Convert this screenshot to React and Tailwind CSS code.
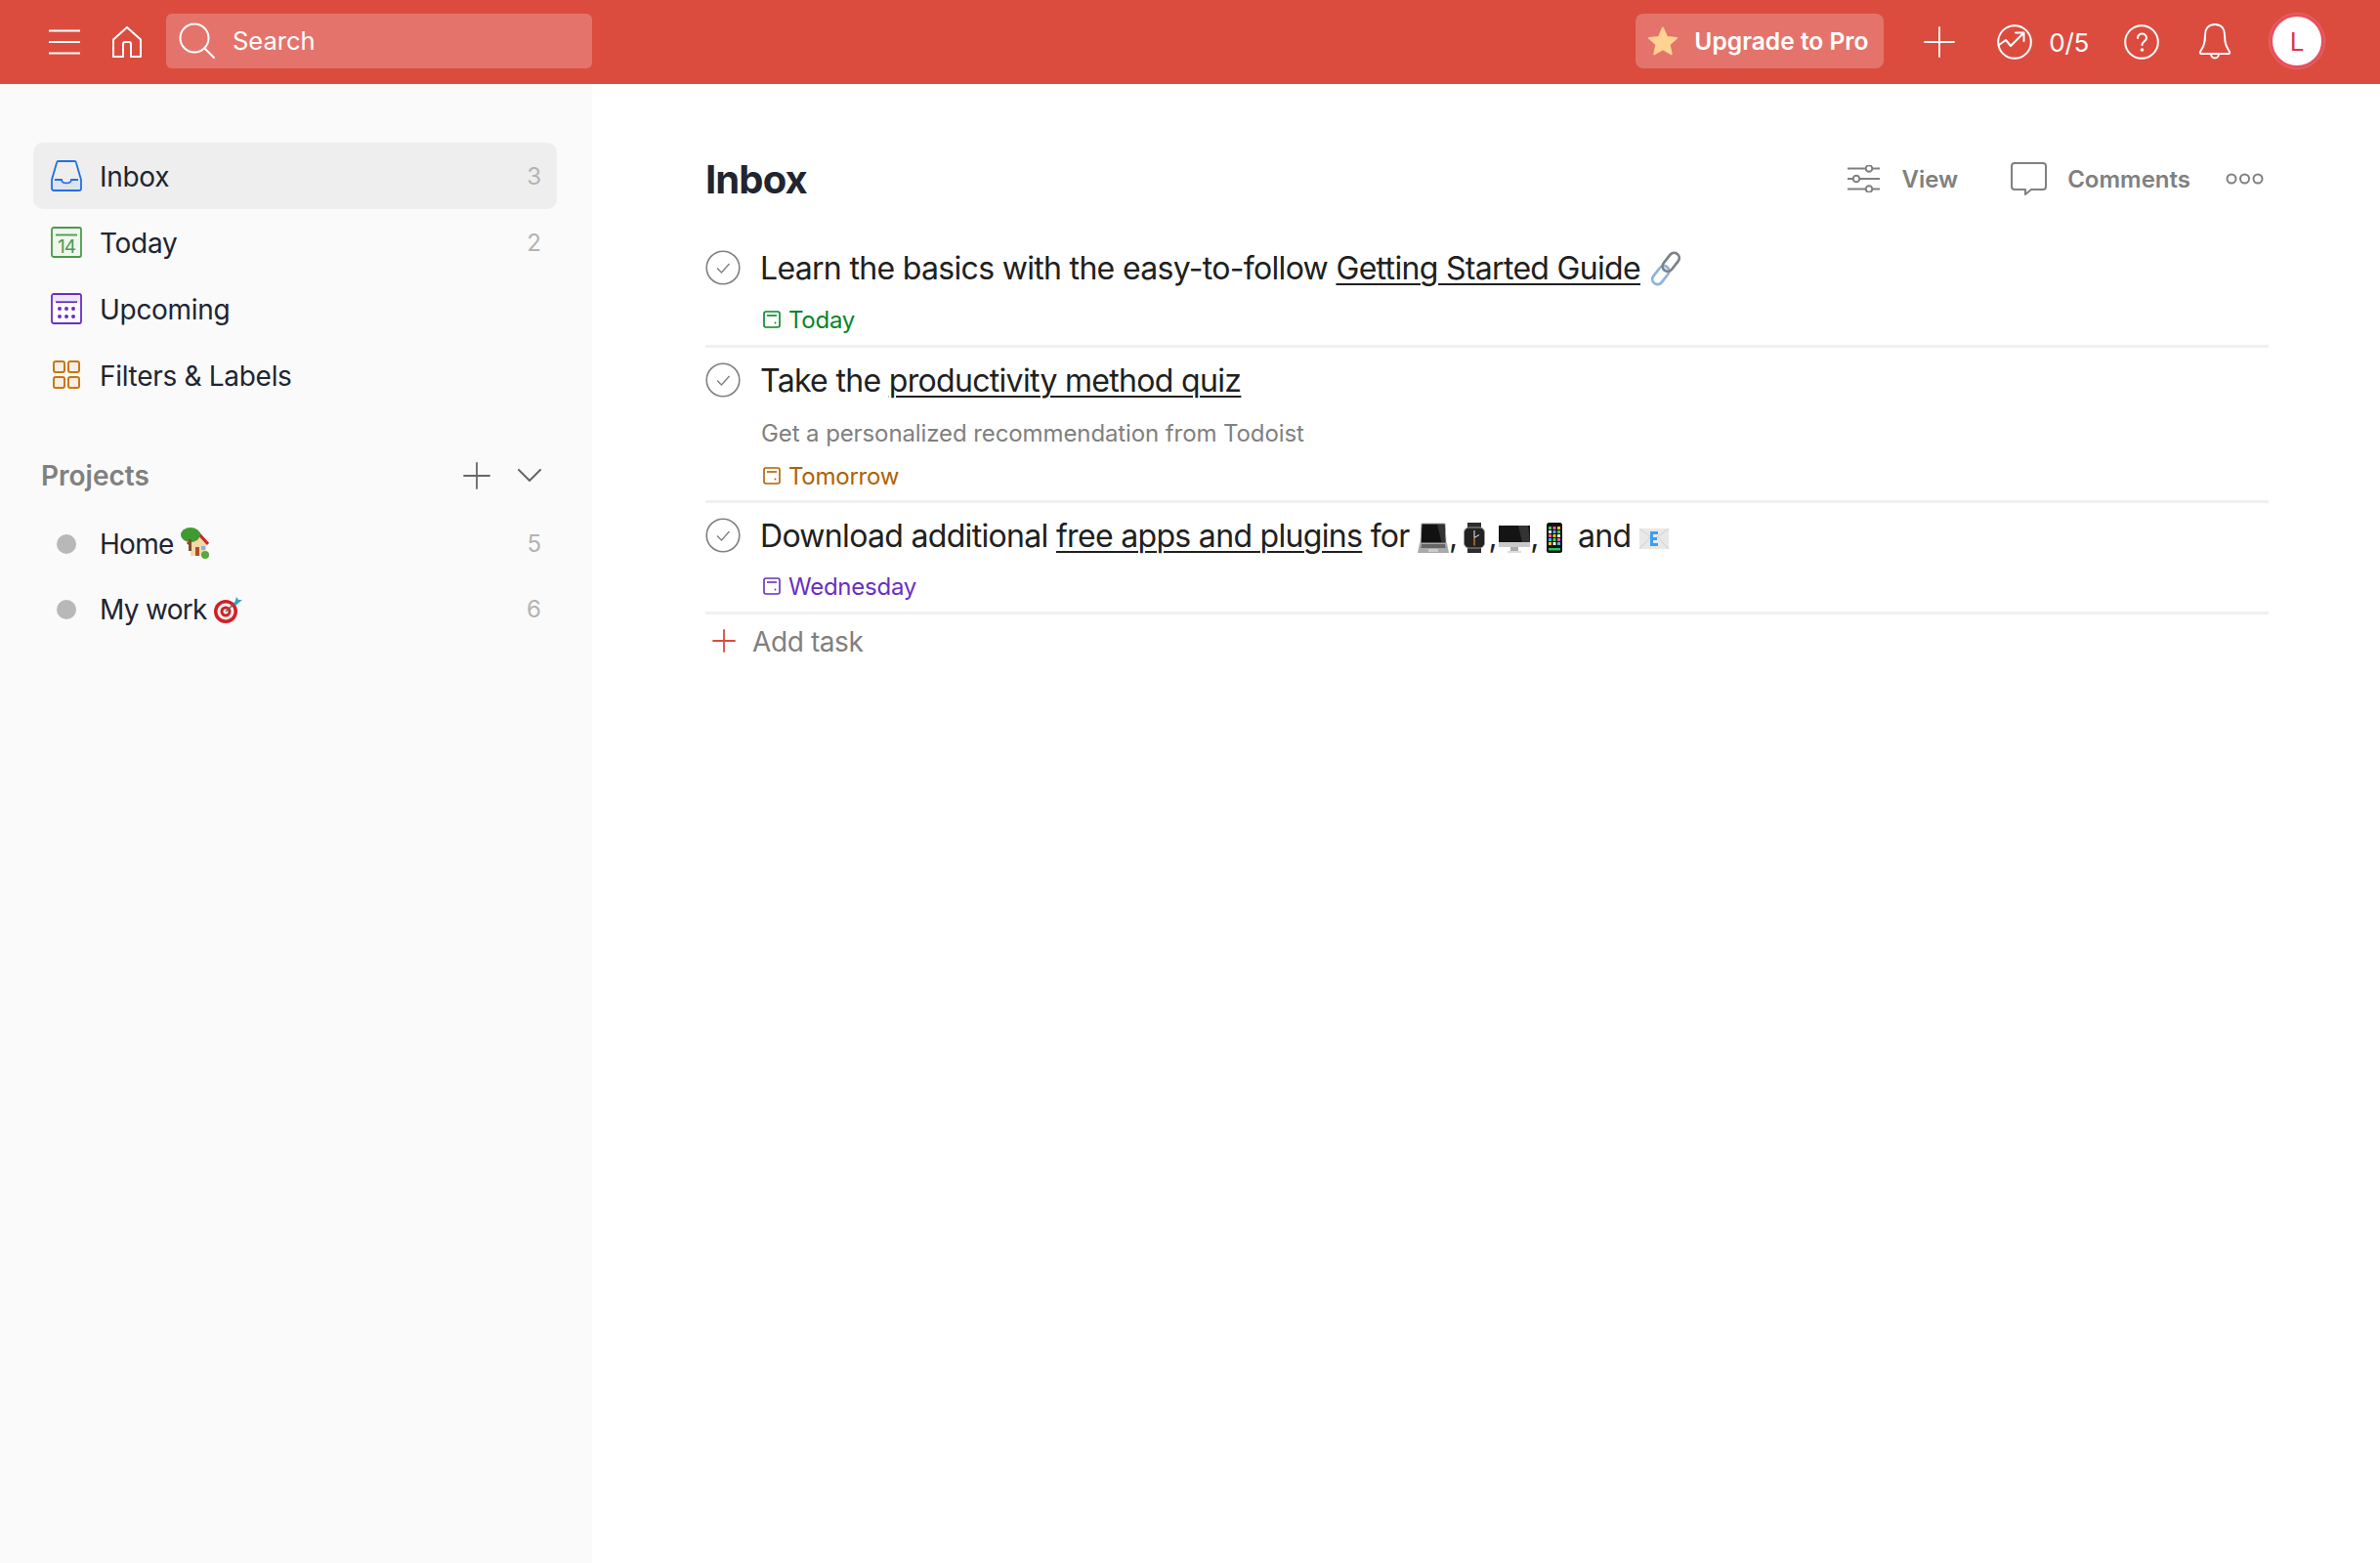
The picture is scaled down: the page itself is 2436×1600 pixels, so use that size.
const font = { fontFamily: 'Inter, "Liberation Sans", sans-serif' };

const LineIcon = ({ size = 32, w, h, sw = 2, children, className = '' }) => (
  <svg width={w || size} height={h || size} viewBox={`0 0 ${w || size} ${h || size}`} fill="none" stroke="currentColor" strokeWidth={sw} strokeLinecap="round" strokeLinejoin="round" className={`shrink-0 ${className}`}>
    {children}
  </svg>
);

const Plus = ({ size = 32, className }) => (
  <LineIcon size={size} sw={1.8} className={className}>
    <path d={`M${size / 2} 1V${size - 1}M1 ${size / 2}H${size - 1}`} />
  </LineIcon>
);

const Check = () => (
  <svg width="36" height="36" viewBox="0 0 36 36" fill="none" stroke="#808080" strokeWidth="1.6" className="shrink-0">
    <circle cx="18" cy="18" r="16.8" />
    <path d="M12 18.5l4.5 4.5 8-9" strokeWidth="1.4" />
  </svg>
);

const InboxIcon = () => (
  <svg width="32" height="32" viewBox="0 0 32 32" fill="none" stroke="#246fe0" strokeWidth="1.8" className="shrink-0">
    <path d="M1 20h10c1 4 9 4 10 0h10v9a2 2 0 0 1-2 2H3a2 2 0 0 1-2-2z" fill="#dce4f0" stroke="none" />
    <path d="M8 1h16a2 2 0 0 1 2 1.700L31 20v9a2 2 0 0 1-2 2H3a2 2 0 0 1-2-2v-9L6 2.700A2 2 0 0 1 8 1z" />
    <path d="M4 20h7c.500 4.500 9.500 4.500 10 0h7" />
  </svg>
);

const TodayIcon = () => (
  <svg width="32" height="32" viewBox="0 0 32 32" fill="none" className="shrink-0">
    <rect x="1" y="1" width="30" height="30" rx="2" fill="#f1f6ef" stroke="#4b9b4b" strokeWidth="1.8" />
    <path d="M5 8.500h22" stroke="#4b9b4b" strokeWidth="1.800" />
    <text x="16" y="27" textAnchor="middle" fontSize="19" letterSpacing="-1" fill="#4b9b4b" fontFamily="Inter, sans-serif">14</text>
  </svg>
);

const UpcomingIcon = () => (
  <svg width="32" height="32" viewBox="0 0 32 32" fill="none" className="shrink-0">
    <rect x="1" y="1" width="30" height="30" rx="2" fill="#fff" stroke="#692fc2" strokeWidth="1.8" />
    <path d="M2 2h28v7H2z" fill="#ece6f6" />
    <path d="M5 9.200h22" stroke="#692fc2" strokeWidth="1.800" />
    {[9, 16, 23].map((x) => [16, 24].map((y) => <circle key={`${x}-${y}`} cx={x} cy={y} r="2" fill="#692fc2" />))}
  </svg>
);

const FiltersIcon = () => (
  <svg width="32" height="32" viewBox="0 0 32 32" fill="#f7efe6" stroke="#c9760f" strokeWidth="2" className="shrink-0">
    <rect x="3" y="2" width="11" height="11" rx="2" />
    <rect x="18" y="2" width="11" height="11" rx="2" />
    <rect x="3" y="18" width="11" height="11" rx="2" />
    <rect x="18" y="18" width="11" height="11" rx="2" />
  </svg>
);

const DateIcon = () => (
  <svg width="18" height="18" viewBox="0 0 18 18" fill="none" stroke="currentColor" strokeWidth="1.6" className="shrink-0">
    <rect x="1" y="1" width="16" height="16" rx="2" />
    <path d="M4 5h10" />
    <circle cx="12.500" cy="12.500" r="0.900" fill="currentColor" stroke="none" />
  </svg>
);

const LinkEmoji = () => (
  <svg width="36" height="36" viewBox="0 0 34 34" fill="none" className="inline-block align-[-7px]">
    <g transform="rotate(-52 17 17)" strokeWidth="2.600">
      <rect x="-1" y="12" width="20" height="10" rx="5" stroke="#8fb4d6" />
      <rect x="15" y="12" width="20" height="10" rx="5" stroke="#7d8288" />
    </g>
  </svg>
);

const LaptopEmoji = () => (
  <svg width="32" height="31" viewBox="0 0 32 31" className="inline-block align-[-6px]">
    <path d="M4 1h24l1 20H3z" fill="#111" stroke="#aaa" />
    <path d="M20 2h7.500l1 18h-4z" fill="#333" />
    <path d="M2 21h28l2 10H0z" fill="#a9a9a9" />
    <path d="M4 22h24l.600 4H3.400z" fill="#666" />
    <path d="M11 27h10v3H11z" fill="#ccc" />
  </svg>
);

const WatchEmoji = () => (
  <svg width="22" height="31" viewBox="0 0 22 31" className="inline-block align-[-6px]">
    <path d="M4 0h14v6H4zM4 25h14v6H4z" fill="#2c2c2c" />
    <rect x="0.500" y="5" width="21" height="21" rx="5" fill="#222" stroke="#999" />
    <path d="M11 15.500V8M11 15.500l5-3" stroke="#eee" strokeWidth="1" />
    <path d="M11 15.500v8" stroke="#e08a2e" strokeWidth="1.200" />
  </svg>
);

const ImacEmoji = () => (
  <svg width="32" height="31" viewBox="0 0 32 31" className="inline-block align-[-6px]">
    <path d="M0 3h32v17H0z" fill="#141414" />
    <path d="M20 3h10l2 17h-8z" fill="#333" />
    <path d="M0 20h32v5H0z" fill="#c9c9c9" />
    <path d="M12 25h8v4h-8z" fill="#aaa" />
    <path d="M9 29h14v2H9z" fill="#ddd" />
  </svg>
);

const PhoneEmoji = () => (
  <svg width="16" height="31" viewBox="0 0 16 31" className="inline-block align-[-6px]">
    <rect width="16" height="31" rx="2.500" fill="#111" />
    {[4, 8, 12, 16, 20].map((y, i) => [2, 6.500, 11].map((x, j) => (
      <rect key={`${x}-${y}`} x={x} y={y} width="3" height="3" fill={['#39d353', '#f5f5f5', '#ff5fa2', '#38bdf8', '#facc15'][(i + j * 2) % 5]} />
    )))}
    <path d="M2 26h12v2.500H2z" fill="#22c55e" />
  </svg>
);

const MailEmoji = () => (
  <svg width="30" height="21" viewBox="0 0 30 21" className="inline-block align-[-2px]">
    <rect width="30" height="21" rx="1" fill="#e8e8e8" />
    <path d="M0 0l15 11L30 0M0 21l11-12M30 21L19 9" fill="none" stroke="#cfcfcf" />
    <path d="M11 3h8v3h-5v3h4v3h-4v3h5v3h-8z" fill="#3b9ff0" />
  </svg>
);

const HomeEmoji = () => (
  <svg width="29" height="33" viewBox="0 0 29 33" className="inline-block align-[-5px]">
    <path d="M10 15l8-8 8 8v14H10z" fill="#f4d9a8" />
    <path d="M7 17L18 6l10 11" fill="none" stroke="#c8282a" strokeWidth="3" />
    <ellipse cx="10" cy="7.500" rx="10" ry="7.500" fill="#3f9b2f" />
    <path d="M8 12h3v12H8z" fill="#7a5230" />
    <path d="M15 20h4v9h-4z" fill="#a8502d" />
    <path d="M21 19h4v4h-4z" fill="#7fb4dc" />
    <circle cx="25" cy="28" r="4" fill="#58a83a" />
  </svg>
);

const TargetEmoji = () => (
  <svg width="29" height="30" viewBox="0 0 29 30" className="inline-block align-[-5px]">
    <circle cx="12" cy="17" r="12" fill="#d31f26" />
    <circle cx="12" cy="17" r="8.500" fill="#f7f0f0" />
    <circle cx="12" cy="17" r="5.500" fill="#d31f26" />
    <circle cx="12" cy="17" r="2.500" fill="#f7f0f0" />
    <path d="M12 17L24 6" stroke="#666" strokeWidth="1.500" />
    <path d="M21 9l2-7 2 3 4 0-7 6z" fill="#2fa8c4" />
  </svg>
);

const navItems = [
  { label: 'Inbox', count: 3, icon: <InboxIcon />, active: true },
  { label: 'Today', count: 2, icon: <TodayIcon /> },
  { label: 'Upcoming', icon: <UpcomingIcon /> },
  { label: 'Filters & Labels', icon: <FiltersIcon /> },
];

const projects = [
  { label: 'Home', count: 5, emoji: <HomeEmoji /> },
  { label: 'My work', count: 6, emoji: <TargetEmoji /> },
];

const linkClass = 'underline decoration-2 underline-offset-[4px]';

const Header = () => (
  <header className="flex h-[86px] shrink-0 items-center bg-[#db4c3f] text-white">
    <LineIcon w={32} h={26} className="ml-[50px]">
      <path d="M0 1.500h32M0 13h32M0 24.500h32" strokeLinecap="butt" />
    </LineIcon>
    <LineIcon size={32} className="ml-[32px]">
      <path d="M2 13.500L16 1l14 12.500V31H20V18a2 2 0 0 0-2-2h-4a2 2 0 0 0-2 2v13H2z" />
    </LineIcon>
    <div className="mb-[2px] ml-[24px] flex h-[56px] w-[436px] items-center rounded-[6px] bg-[#e4746b]">
      <LineIcon size={38} className="ml-[13px]">
        <circle cx="16" cy="16" r="14.500" />
        <path d="M26.500 26.500L36 36" />
      </LineIcon>
      <span className="ml-[17px] pt-[1px] text-[25.500px]">Search</span>
    </div>
    <div className="mb-[2px] ml-auto flex h-[56px] w-[254px] items-center rounded-[8px] bg-[#e4746b]">
      <svg width="34" height="32" viewBox="0 0 24 23" fill="#ffd392" className="ml-[11px] shrink-0" stroke="#ffd392" strokeWidth="1.500" strokeLinejoin="round">
        <path d="M12 2l2.900 6.600 7.100.700-5.300 4.700 1.500 7L12 17.300 5.800 21l1.500-7L2 9.300l7.100-.700z" />
      </svg>
      <span className="ml-[15px] text-[24.600px] font-semibold whitespace-nowrap">Upgrade to Pro</span>
    </div>
    <Plus className="ml-[41px]" />
    <LineIcon size={36} className="ml-[43px]">
      <circle cx="18" cy="18" r="16.800" />
      <path d="M2 21l7-5 5 6 13-13M19 8.500h8.500V17" />
    </LineIcon>
    <span className="ml-[17px] text-[26px] tracking-[-0.3px]">0/5</span>
    <LineIcon size={36} className="ml-[36px]">
      <circle cx="18" cy="18" r="16.800" />
      <path d="M14 14c0-6 9-6 9 0 0 3-4.500 3.500-4.500 7" />
      <circle cx="18.500" cy="26" r="0.800" fill="currentColor" />
    </LineIcon>
    <LineIcon w={34} h={38} className="ml-[40px]">
      <path d="M17 1c-7 0-10 5-10 11 0 9-2 12-5 17-.500 1 0 2 1 2h28c1 0 1.500-1 1-2-3-5-5-8-5-17 0-6-3-11-10-11zM13 31c0 6 8 6 8 0" />
    </LineIcon>
    <div className="mb-[2px] ml-[39px] mr-[57px] flex h-[56px] w-[56px] items-center justify-center rounded-full border-[3px] border-[#e84f5f] bg-white text-[26px] text-[#e0344a] outline outline-1 outline-[#e56a6a]">
      L
    </div>
  </header>
);

const Sidebar = () => (
  <aside className="w-[606px] shrink-0 bg-[#fafafa] pl-[34px] pr-[36px] pt-[60px] text-[#202530]">
    {navItems.map((item) => (
      <div key={item.label} className={`flex h-[68px] items-center rounded-[10px] pl-[18px] pr-[16px] ${item.active ? 'bg-[#eeeeee]' : ''}`}>
        {item.icon}
        <span className="ml-[18px] pt-[1px] text-[28px] tracking-[-0.3px]">{item.label}</span>
        <span className="ml-auto pt-[1px] text-[24px] text-[#b3b3b3]">{item.count}</span>
      </div>
    ))}
    <div className="mb-[2px] mt-[35px] flex h-[68px] items-center pl-[8px] pr-[16px]">
      <span className="text-[28px] font-semibold text-[#808080]">Projects</span>
      <Plus size={28} className="ml-auto text-[#666666]" />
      <LineIcon w={24} h={13} className="ml-[28px] mb-[2px] text-[#666666]">
        <path d="M1 1l11 11L23 1" />
      </LineIcon>
    </div>
    {projects.map((project) => (
      <div key={project.label} className="flex h-[67px] items-center pl-[18px] pr-[16px]">
        <span className="ml-[6px] h-[20px] w-[20px] shrink-0 rounded-full bg-[#b8b8b8]" />
        <span className="ml-[24px] text-[28px] tracking-[-0.7px]">{project.label}</span>
        <span className="ml-[7px] flex items-center">{project.emoji}</span>
        <span className="ml-auto pt-[1px] text-[24px] text-[#b3b3b3]">{project.count}</span>
      </div>
    ))}
  </aside>
);

const DateRow = ({ label, color, className }) => (
  <div className={`flex h-[30px] items-center pl-[59px] text-[24px] tracking-[-0.25px] ${color} ${className}`}>
    <DateIcon />
    <span className="ml-[8px] pt-[1px]">{label}</span>
  </div>
);

const Task = ({ children, className = 'pb-[11px]' }) => (
  <div className={`border-b-[3px] border-[#f0f0f0] pt-[15px] ${className}`}>{children}</div>
);

const TaskTitle = ({ children }) => (
  <div className="flex h-[36px] items-center">
    <Check />
    <div className="ml-[20px] pt-[2px] text-[32px] tracking-[-0.68px] whitespace-nowrap text-[#202020]">{children}</div>
  </div>
);

const MainPanel = () => (
  <main className="flex-1 pl-[116px] pr-[114px] pt-[69px]">
    <div className="mb-[30px] flex h-[56px] items-center text-[#808080]">
      <h1 className="pt-[2px] text-[40px] font-bold tracking-[-0.9px] text-[#202530]">Inbox</h1>
      <LineIcon w={33} h={28} className="ml-auto">
        <path d="M0 3.500h18M26 3.500h7M0 14h5M13 14h20M0 24.500h18M26 24.500h7" />
        <circle cx="22" cy="3.500" r="3.300" />
        <circle cx="9" cy="14" r="3.300" />
        <circle cx="22" cy="24.500" r="3.300" />
      </LineIcon>
      <span className="ml-[22px] pt-[1px] text-[24px] font-semibold">View</span>
      <LineIcon w={37} h={34} className="ml-[54px]">
        <path d="M4 1h29a3 3 0 0 1 3 3v21a3 3 0 0 1-3 3H21l-6 5v-5H4a3 3 0 0 1-3-3V4a3 3 0 0 1 3-3z" />
      </LineIcon>
      <span className="ml-[21px] pt-[1px] text-[24px] font-semibold">Comments</span>
      <svg width="39" height="12" viewBox="0 0 39 12" fill="none" stroke="currentColor" strokeWidth="2" className="ml-[36px] mr-[5px] shrink-0">
        <circle cx="6" cy="6" r="4.500" />
        <circle cx="19.500" cy="6" r="4.500" />
        <circle cx="33" cy="6" r="4.500" />
      </svg>
    </div>

    <Task>
      <TaskTitle>
        Learn the basics with the easy-to-follow <a className={linkClass}>Getting Started Guide</a> <LinkEmoji />
      </TaskTitle>
      <DateRow label="Today" color="text-[#058527]" className="mt-[20px]" />
    </Task>

    <Task className="pb-[10px]">
      <TaskTitle>
        Take the <a className={linkClass}>productivity method quiz</a>
      </TaskTitle>
      <div className="ml-[57px] mt-[21px] flex h-[30px] items-center pt-[1px] text-[24px] tracking-[-0.1px] text-[#808080]">
        Get a personalized recommendation from Todoist
      </div>
      <DateRow label="Tomorrow" color="text-[#ad6200]" className="mt-[14px]" />
    </Task>

    <Task>
      <TaskTitle>
        Download additional <a className={linkClass}>free apps and plugins</a> for <LaptopEmoji />,
        <span className="ml-[6px] mr-[4px]"><WatchEmoji /></span>,
        <span className="ml-[2px]"><ImacEmoji /></span>,
        <span className="ml-[8px] mr-[8px]"><PhoneEmoji /></span> and <MailEmoji />
      </TaskTitle>
      <DateRow label="Wednesday" color="text-[#692fc2]" className="mt-[19px]" />
    </Task>

    <div className="mt-[9px] flex h-[36px] items-center">
      <Plus size={24} className="ml-[7px] text-[#dc4c3e]" />
      <span className="ml-[17px] pt-[1px] text-[28px] tracking-[-0.4px] text-[#808080]">Add task</span>
    </div>
  </main>
);

export default function App() {
  return (
    <div className="flex min-h-screen flex-col bg-white" style={font}>
      <Header />
      <div className="flex flex-1">
        <Sidebar />
        <MainPanel />
      </div>
    </div>
  );
}
